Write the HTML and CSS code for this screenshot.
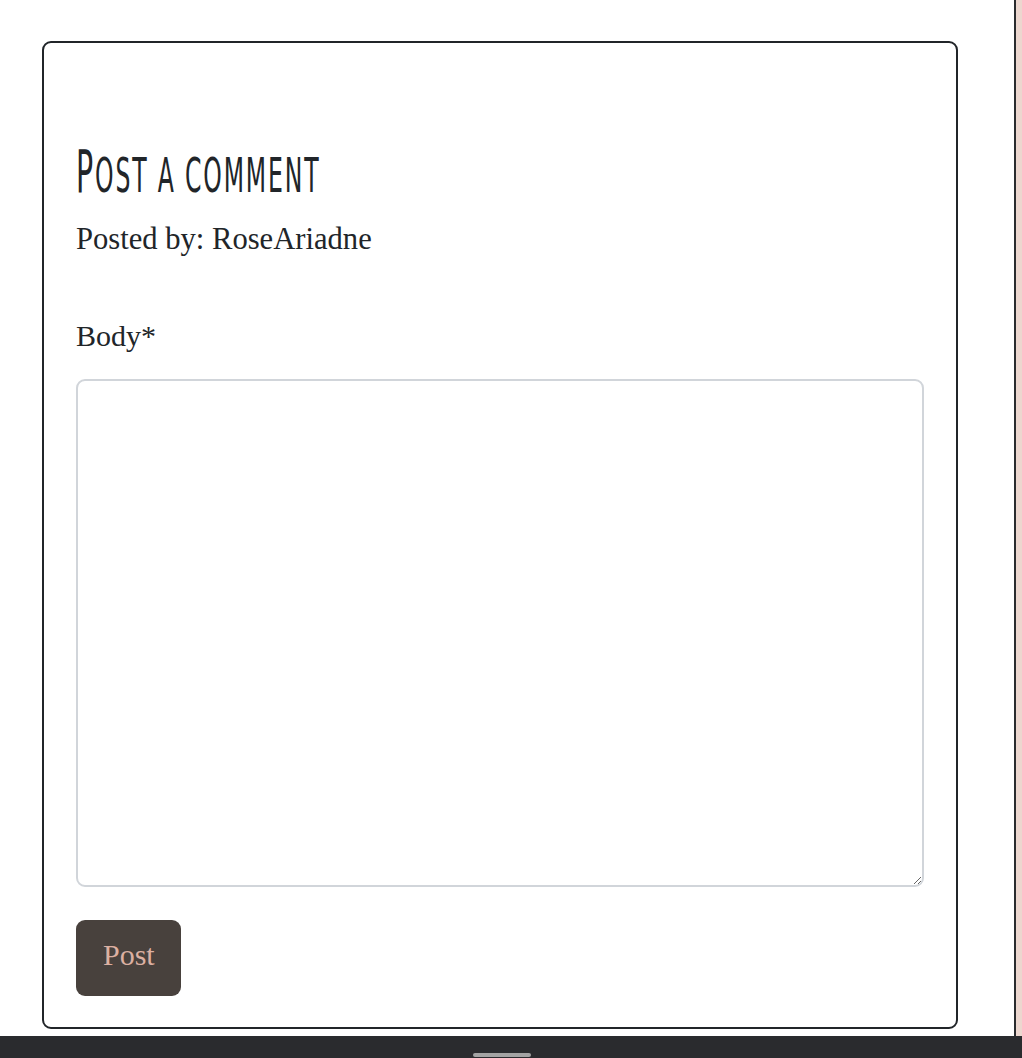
FILE: index.html
```html
<!DOCTYPE html>
<html lang="en">
<head>
<meta charset="utf-8">
<title>Post a comment</title>
<link rel="stylesheet" href="styles.css">
</head>
<body>
<div class="screen">
  <div class="viewport">
    <main class="main">
      <section class="card">
        <h2 class="title"><span class="initial">P</span>ost a comment</h2>
        <p class="posted">Posted by: RoseAriadne</p>
        <form class="comment-form">
          <label class="field-label" for="body">Body*</label>
          <textarea id="body" class="field-input"></textarea>
          <button type="button" class="btn-post">Post</button>
        </form>
      </section>
    </main>
    <div class="divider"></div>
    <aside class="side"></aside>
  </div>
  <div class="bottom-bar"><span class="handle"></span></div>
</div>
</body>
</html>
```

FILE: styles.css
```css
html, body {
  margin: 0;
  padding: 0;
  background: #ffffff;
}

body {
  font-family: "Liberation Serif", "Times New Roman", serif;
  color: #212529;
}

.screen {
  display: flex;
  flex-direction: column;
  height: 1058px;
  overflow: hidden;
}

.viewport {
  display: flex;
  height: 1036px;
}

.main {
  width: 1014px;
  padding: 41px 0 0 42px;
  box-sizing: border-box;
  overflow: hidden;
}

.divider {
  width: 2px;
  background: #2a2b2e;
}

.side {
  flex: 1;
  background: #ecd7cf;
}

.card {
  width: 916px;
  box-sizing: border-box;
  border: 2px solid #212529;
  border-radius: 9px;
  padding: 99px 32px 31px 32px;
  background: #ffffff;
}

.title {
  margin: 0;
  font-family: "Liberation Sans Narrow", "DejaVu Sans Condensed", "Liberation Sans", sans-serif;
  font-weight: normal;
  font-size: 48px;
  line-height: 60px;
  letter-spacing: 3.4px;
  text-transform: uppercase;
  color: #212529;
  transform: scaleX(0.545);
  transform-origin: left center;
  white-space: nowrap;
}

.initial {
  font-size: 58px;
}

.posted {
  margin: 12px 0 0 0;
  font-size: 30.6px;
  line-height: 45px;
}

.comment-form {
  display: flex;
  flex-direction: column;
  align-items: flex-start;
  margin-top: 51px;
}

.field-label {
  font-size: 30px;
  line-height: 45px;
}

.field-input {
  margin-top: 21px;
  width: 100%;
  height: 508px;
  box-sizing: border-box;
  border: 2px solid #d1d5da;
  border-radius: 9px;
  padding: 8px 12px;
  font-family: inherit;
  font-size: 20px;
  resize: vertical;
  background: #ffffff;
}

.btn-post {
  margin-top: 33px;
  background: #48413d;
  color: #dcb0a2;
  border: none;
  border-radius: 9px;
  font-family: "Liberation Serif", "Times New Roman", serif;
  font-size: 30px;
  line-height: 45px;
  padding: 12px 26px 19px 27px;
  cursor: pointer;
}

.bottom-bar {
  height: 22px;
  background: #2a2b2e;
  display: flex;
  justify-content: center;
  align-items: flex-end;
}

.handle {
  width: 58px;
  height: 4px;
  margin: 0 18px 1px 0;
  border-radius: 2px;
  background: #a3a3a3;
}
```
